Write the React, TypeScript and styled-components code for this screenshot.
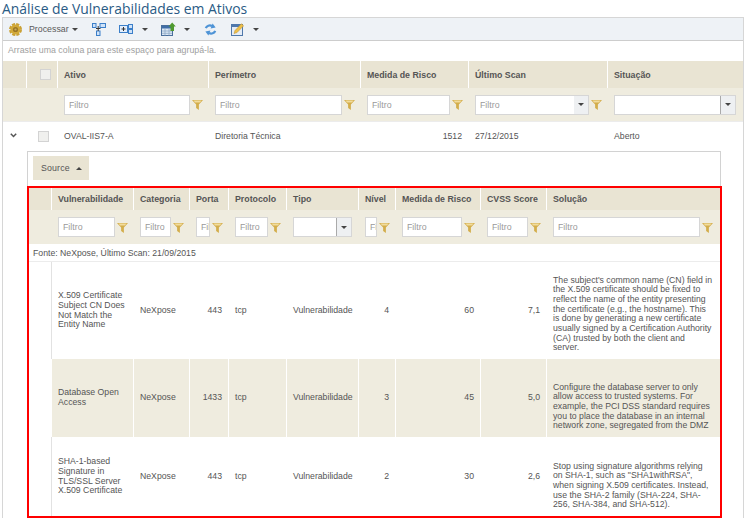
import React from "react";
import styled, { createGlobalStyle } from "styled-components";

const OUTER_COLUMNS = "24px 31px 151px 152px 108px 139px 135px";
const INNER_COLUMNS = "23px 82px 56px 39px 58px 72px 37px 85px 66px 172px";

const GlobalStyle = createGlobalStyle`
  html, body {
    margin: 0;
    height: 518px;
    overflow: hidden;
    background: #fff;
  }
  body {
    font-family: "Liberation Sans", Arial, sans-serif;
    font-size: 8.7px;
    color: #555;
  }
`;

const Page = styled.div`
  width: 746px;
  height: 518px;
  overflow: hidden;
`;

const Title = styled.h1`
  margin: 0;
  padding-left: 2px;
  height: 17px;
  font-family: "Open Sans", sans-serif;
  font-size: 13.9px;
  line-height: 18px;
  font-weight: 400;
  color: #2a5b85;
  white-space: nowrap;
`;

const Grid = styled.div`
  margin-left: 2px;
  width: 740px;
  border: 1px solid #d6d6d6;
  border-bottom: 0;
`;

const Toolbar = styled.div`
  display: flex;
  align-items: center;
  height: 22px;
  background: #eef2f6;
  border-bottom: 1px solid #cdcdcd;
`;

const ToolItem = styled.div<{ $left: number }>`
  display: flex;
  align-items: center;
  margin-left: ${(p) => p.$left}px;
`;

const ToolLabel = styled.span`
  margin: 0 3px 0 7px;
  font-size: 8.8px;
  color: #5a5a5a;
`;

const Caret = styled.i<{ $gap?: number; $up?: boolean }>`
  display: block;
  width: 0;
  height: 0;
  margin-left: ${(p) => p.$gap ?? 0}px;
  border-left: 3px solid transparent;
  border-right: 3px solid transparent;
  border-top: ${(p) => (p.$up ? "0" : "3px solid #444")};
  border-bottom: ${(p) => (p.$up ? "3px solid #444" : "0")};
`;

const GroupPanel = styled.div`
  height: 20px;
  padding-left: 5px;
  line-height: 18px;
  font-size: 8.8px;
  color: #a0a0a0;
`;

const Row = styled.div<{ $columns: string; $height: number; $bg?: string }>`
  display: grid;
  grid-template-columns: ${(p) => p.$columns};
  height: ${(p) => p.$height}px;
  background: ${(p) => p.$bg ?? "transparent"};
`;

const HeaderCell = styled.div`
  display: flex;
  align-items: center;
  padding-left: 6px;
  border-right: 1px solid #fff;
  font-weight: 700;
  font-size: 8.8px;
  color: #555;
  white-space: nowrap;
  overflow: hidden;
  &:last-child {
    border-right: 0;
  }
`;

const FilterCell = styled.div`
  display: flex;
  align-items: center;
  gap: 2px;
  padding: 0 6px;
  min-width: 0;
`;

const FilterInput = styled.input`
  flex: 1;
  min-width: 0;
  width: 0;
  height: 20px;
  box-sizing: border-box;
  padding: 0 0 0 4px;
  border: 1px solid #d6d6d6;
  border-radius: 0;
  background: #fff;
  font-family: inherit;
  font-size: 8.8px;
  outline: none;
  &::placeholder {
    color: #9a9a9a;
    opacity: 1;
  }
`;

const Combo = styled.div`
  flex: 1;
  min-width: 0;
  display: flex;
  height: 20px;
  box-sizing: border-box;
  border: 1px solid #d6d6d6;
  background: #fff;
  &:last-child {
    margin-right: 1px;
  }
`;

const ComboText = styled.span`
  flex: 1;
  padding-left: 4px;
  line-height: 18px;
  font-size: 8.8px;
  color: #9a9a9a;
`;

const ComboArrow = styled.span<{ $divided?: boolean }>`
  width: 14px;
  display: flex;
  align-items: center;
  justify-content: center;
  background: #eef0f2;
  border-left: ${(p) => (p.$divided ? "1px solid #aaa" : "0")};
`;

const CheckMark = styled.span`
  display: block;
  width: 9px;
  height: 9px;
  margin: auto;
  border: 1px solid #d3d3d3;
  background: #f0f0ee;
`;

const BodyCell = styled.div<{ $right?: boolean; $divided?: boolean }>`
  display: flex;
  align-items: center;
  justify-content: ${(p) => (p.$right ? "flex-end" : "flex-start")};
  padding: ${(p) => (p.$right ? "0 6px 0 0" : "0 4px 0 6px")};
  border-right: 1px solid ${(p) => (p.$divided ? "#fff" : "transparent")};
  line-height: 9.67px;
  color: #555;
`;

const SolutionCell = styled.div`
  align-self: end;
  padding: 0 6px 6px 6px;
  line-height: 9.67px;
  color: #555;
`;

const SideCell = styled.div<{ $rule?: boolean }>`
  background: #fff;
  border-right: 1px solid ${(p) => (p.$rule ? "#e2e2e2" : "#fff")};
`;

const Expander = styled.div`
  display: flex;
  align-items: center;
  justify-content: center;
  padding: 0 3px 3px 0;
`;

const DetailPanel = styled.div`
  margin: 0 22px 0 24px;
  border: 1px solid #d2d2d2;
  border-bottom: 0;
  padding-top: 4px;
`;

const SourceButton = styled.div`
  display: inline-flex;
  align-items: center;
  height: 24px;
  width: 56px;
  box-sizing: border-box;
  margin: 0 0 6px 5px;
  padding-left: 8px;
  background: #e9e4d3;
  font-size: 8.8px;
  letter-spacing: 0.15px;
  color: #555;
  vertical-align: top;
`;

const RedBox = styled.div`
  margin: 0 -2px 0 -1px;
  border: 2px solid #f00;
`;

const SourceInfo = styled.div`
  height: 18px;
  line-height: 18px;
  padding-left: 4px;
  color: #555;
  white-space: nowrap;
`;

const RowRule = styled.div`
  height: 1px;
  background: #ececec;
`;

const SourceRule = styled(RowRule)`
  margin-top: -1px;
`;

const FunnelIcon = () => (
  <svg width="11" height="11" viewBox="0 0 12 11" preserveAspectRatio="none" style={{ flex: "none" }}>
    <path d="M0 1h12L7.5 5.6V11L4.5 9V5.6z" fill="#d3ad4b" />
    <path d="M1.6 1.6h8.8L8.6 3.4H3.4z" fill="#f1dc9c" />
  </svg>
);

const GearIcon = () => (
  <svg width="13" height="13" viewBox="0 0 13 13">
    <circle cx="6.5" cy="6.5" r="5" fill="none" stroke="#c9a035" strokeWidth="3" strokeDasharray="2.9 1.03" />
    <circle cx="6.5" cy="6.5" r="5" fill="#d2a938" />
    <circle cx="6.5" cy="6.5" r="2.6" fill="#9a7624" />
    <circle cx="6.5" cy="6.5" r="1.1" fill="#c9ab5c" />
  </svg>
);

const HierarchyIcon = () => (
  <svg width="14" height="13" viewBox="0 0 14 13">
    <rect x="0.5" y="0.5" width="3.5" height="4" fill="#cfe2f7" stroke="#3b7fc9" />
    <rect x="8" y="0.5" width="5.5" height="4" fill="#cfe2f7" stroke="#3b7fc9" />
    <rect x="4.5" y="8" width="3.5" height="4.5" fill="#cfe2f7" stroke="#3b7fc9" />
    <path d="M6.2 3v5M4 5.5h4.5" stroke="#333" strokeWidth="1" />
  </svg>
);

const GroupIcon = () => (
  <svg width="14" height="10" viewBox="0 0 14 10">
    <rect x="0.5" y="1.5" width="8" height="7" fill="#e3eefb" stroke="#3b7fc9" />
    <rect x="9.5" y="0.5" width="4" height="4" fill="#cfe2f7" stroke="#3b7fc9" />
    <rect x="9.5" y="5.5" width="4" height="4" fill="#cfe2f7" stroke="#3b7fc9" />
    <path d="M4.5 3v4M2.5 5h4" stroke="#333" strokeWidth="1" />
  </svg>
);

const TableArrowIcon = () => (
  <svg width="15" height="14" viewBox="0 0 15 14">
    <rect x="0.5" y="3.5" width="11" height="10" fill="#dbe7f4" stroke="#4a6f9c" />
    <rect x="1" y="4" width="10" height="2.5" fill="#3f6ea8" />
    <path d="M4 6.5v7M8 6.5v7M1 9h10M1 11.3h10" stroke="#8ea9c8" strokeWidth="0.8" />
    <path d="M11.2 0.5L14.8 4.5H13V9H9.5V4.5H7.6z" fill="#4f9a2f" />
  </svg>
);

const RefreshIcon = () => (
  <svg width="13" height="13" viewBox="0 0 13 13" fill="none">
    <path d="M1.8 5.2C2.6 2.8 5.6 1.8 8 3" stroke="#4d93d6" strokeWidth="2.2" />
    <path d="M11.6 4.6L6.6 5.4L8.6 0.4z" fill="#4d93d6" />
    <path d="M11.2 7.8C10.4 10.2 7.4 11.2 5 10" stroke="#4d93d6" strokeWidth="2.2" />
    <path d="M1.4 8.4L6.4 7.6L4.4 12.6z" fill="#4d93d6" />
  </svg>
);

const EditIcon = () => (
  <svg width="13" height="13" viewBox="0 0 13 13">
    <rect x="0.5" y="1.5" width="11" height="11" fill="#e4ecf6" stroke="#4f78ab" />
    <rect x="1" y="2" width="10" height="2" fill="#4f78ab" />
    <path d="M3 10.5L4 7.6L10.4 0.8L12.6 2.8L6 9.6z" fill="#eec04a" stroke="#b98a24" strokeWidth="0.5" />
  </svg>
);

const ChevronIcon = () => (
  <svg width="7" height="5" viewBox="0 0 7 5">
    <path d="M0.8 0.8L3.5 3.5L6.2 0.8" fill="none" stroke="#555" strokeWidth="1.5" />
  </svg>
);

const outerHeaders = ["", "", "Ativo", "Perímetro", "Medida de Risco", "Último Scan", "Situação"];
const innerHeaders = [
  "",
  "Vulnerabilidade",
  "Categoria",
  "Porta",
  "Protocolo",
  "Tipo",
  "Nível",
  "Medida de Risco",
  "CVSS Score",
  "Solução",
];

const vulnerabilities = [
  {
    name: "X.509 Certificate Subject CN Does Not Match the Entity Name",
    port: 443,
    level: 4,
    risk: 60,
    cvss: "7,1",
    height: 97,
    solution:
      "The subject's common name (CN) field in the X.509 certificate should be fixed to reflect the name of the entity presenting the certificate (e.g., the hostname). This is done by generating a new certificate usually signed by a Certification Authority (CA) trusted by both the client and server.",
  },
  {
    name: "Database Open Access",
    port: 1433,
    level: 3,
    risk: 45,
    cvss: "5,0",
    height: 78,
    solution:
      "Configure the database server to only allow access to trusted systems. For example, the PCI DSS standard requires you to place the database in an internal network zone, segregated from the DMZ",
  },
  {
    name: "SHA-1-based Signature in TLS/SSL Server X.509 Certificate",
    port: 443,
    level: 2,
    risk: 30,
    cvss: "2,6",
    height: 79,
    solution:
      "Stop using signature algorithms relying on SHA-1, such as \"SHA1withRSA\", when signing X.509 certificates. Instead, use the SHA-2 family (SHA-224, SHA-256, SHA-384, and SHA-512).",
  },
];

const TextFilter = () => (
  <FilterCell>
    <FilterInput placeholder="Filtro" />
    <FunnelIcon />
  </FilterCell>
);

const App: React.FC = () => {
  return (
    <Page>
      <GlobalStyle />
      <Title>Análise de Vulnerabilidades em Ativos</Title>
      <Grid>
        <Toolbar>
          <ToolItem $left={6}>
            <GearIcon />
            <ToolLabel>Processar</ToolLabel>
            <Caret />
          </ToolItem>
          <ToolItem $left={14}>
            <HierarchyIcon />
          </ToolItem>
          <ToolItem $left={13}>
            <GroupIcon />
            <Caret $gap={9} />
          </ToolItem>
          <ToolItem $left={13}>
            <TableArrowIcon />
            <Caret $gap={8} />
          </ToolItem>
          <ToolItem $left={14}>
            <RefreshIcon />
          </ToolItem>
          <ToolItem $left={14}>
            <EditIcon />
            <Caret $gap={9} />
          </ToolItem>
        </Toolbar>
        <GroupPanel>Arraste uma coluna para este espaço para agrupá-la.</GroupPanel>

        <Row $columns={OUTER_COLUMNS} $height={27} $bg="#e9e4d3">
          {outerHeaders.map((label, i) => (
            <HeaderCell key={i}>{i === 1 ? <CheckMark /> : label}</HeaderCell>
          ))}
        </Row>
        <Row $columns={OUTER_COLUMNS} $height={33} $bg="#efecdf">
          <div />
          <div />
          <TextFilter />
          <TextFilter />
          <TextFilter />
          <FilterCell>
            <Combo>
              <ComboText>Filtro</ComboText>
              <ComboArrow>
                <Caret />
              </ComboArrow>
            </Combo>
            <FunnelIcon />
          </FilterCell>
          <FilterCell>
            <Combo>
              <ComboText />
              <ComboArrow $divided>
                <Caret />
              </ComboArrow>
            </Combo>
          </FilterCell>
        </Row>
        <RowRule />
        <Row $columns={OUTER_COLUMNS} $height={29}>
          <Expander>
            <ChevronIcon />
          </Expander>
          <BodyCell>
            <CheckMark />
          </BodyCell>
          <BodyCell>OVAL-IIS7-A</BodyCell>
          <BodyCell>Diretoria Técnica</BodyCell>
          <BodyCell $right>1512</BodyCell>
          <BodyCell>27/12/2015</BodyCell>
          <BodyCell>Aberto</BodyCell>
        </Row>

        <DetailPanel>
          <SourceButton>
            Source
            <Caret $up $gap={6} />
          </SourceButton>
          <RedBox>
            <Row $columns={INNER_COLUMNS} $height={22} $bg="#e9e4d3">
              {innerHeaders.map((label, i) => (
                <HeaderCell key={i}>{label}</HeaderCell>
              ))}
            </Row>
            <Row $columns={INNER_COLUMNS} $height={34} $bg="#efecdf">
              <div />
              <TextFilter />
              <TextFilter />
              <TextFilter />
              <TextFilter />
              <FilterCell>
                <Combo>
                  <ComboText />
                  <ComboArrow $divided>
                    <Caret />
                  </ComboArrow>
                </Combo>
              </FilterCell>
              <TextFilter />
              <TextFilter />
              <TextFilter />
              <TextFilter />
            </Row>
            <SourceInfo>Fonte: NeXpose, Último Scan: 21/09/2015</SourceInfo>
            <SourceRule />
            {vulnerabilities.map((item, i) => {
              const zebra = i % 2 === 1;
              return (
                <Row
                  key={item.name}
                  $columns={INNER_COLUMNS}
                  $height={item.height}
                  $bg={zebra ? "#efecdf" : undefined}
                >
                  <SideCell $rule={!zebra} />
                  <BodyCell $divided={zebra}>{item.name}</BodyCell>
                  <BodyCell $divided={zebra}>NeXpose</BodyCell>
                  <BodyCell $divided={zebra} $right>
                    {item.port}
                  </BodyCell>
                  <BodyCell $divided={zebra}>tcp</BodyCell>
                  <BodyCell $divided={zebra}>Vulnerabilidade</BodyCell>
                  <BodyCell $divided={zebra} $right>
                    {item.level}
                  </BodyCell>
                  <BodyCell $divided={zebra} $right>
                    {item.risk}
                  </BodyCell>
                  <BodyCell $divided={zebra} $right>
                    {item.cvss}
                  </BodyCell>
                  <SolutionCell>{item.solution}</SolutionCell>
                </Row>
              );
            })}
          </RedBox>
        </DetailPanel>
      </Grid>
    </Page>
  );
};

export default App;
